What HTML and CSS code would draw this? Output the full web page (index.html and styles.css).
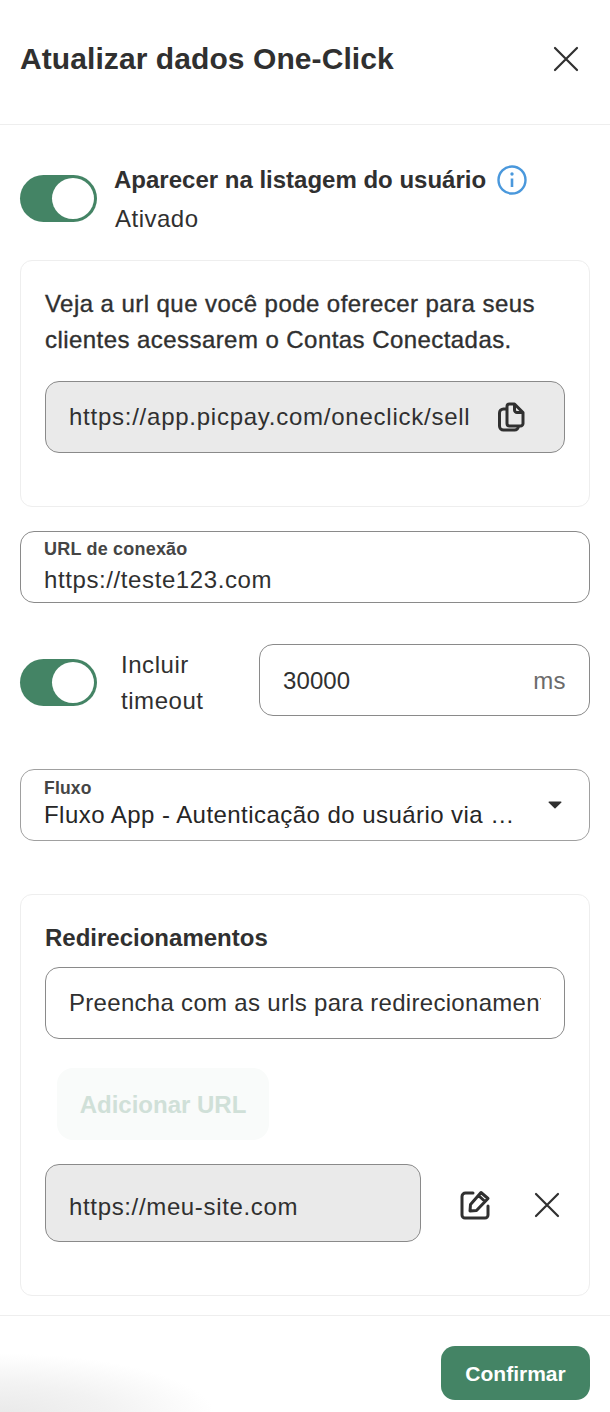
FILE: index.html
```html
<!DOCTYPE html>
<html lang="pt-BR">
<head>
<meta charset="utf-8">
<title>Atualizar dados One-Click</title>
<link rel="stylesheet" href="styles.css">
</head>
<body>
<div class="modal">
  <header class="header">
    <h1 class="title">Atualizar dados One-Click</h1>
    <svg class="close-lg" viewBox="0 0 26 26" width="26" height="26"><path d="M2 2L24 24M24 2L2 24" fill="none" stroke="#303030" stroke-width="2.2" stroke-linecap="round"/></svg>
  </header>
  <main class="content">
    <section class="visible-row">
      <span class="toggle"><span class="knob"></span></span>
      <div class="visible-text">
        <div class="visible-title"><strong>Aparecer na listagem do usuário</strong>
          <svg class="info" viewBox="0 0 32 32" width="32" height="32"><circle cx="16" cy="16" r="13.5" fill="none" stroke="#4a98dc" stroke-width="2.4"/><circle cx="16" cy="10" r="1.7" fill="#4a98dc"/><path d="M16 14.5V23" stroke="#4a98dc" stroke-width="2.6"/></svg>
        </div>
        <div class="visible-state">Ativado</div>
      </div>
    </section>

    <section class="card card-url">
      <p class="card-text">Veja a url que você pode oferecer para seus clientes acessarem o Contas Conectadas.</p>
      <div class="input input-disabled">
        <span class="clip clip-app">https://app.picpay.com/oneclick/seller/abc</span>
        <svg class="copy" viewBox="0 0 28 30" width="28" height="30"><path d="M10 5V4.500A2.500 2.500 0 0 1 12.500 2H17.500L26 10.500V21.500A2.500 2.500 0 0 1 23.500 24H12.500A2.500 2.500 0 0 1 10 21.500V5ZM17.500 2.500V8A2.500 2.500 0 0 0 20 10.500H25.500M10 7H6.500A4 4 0 0 0 2.500 11V24A4 4 0 0 0 6.500 28H17.500A4 4 0 0 0 21.500 24" fill="none" stroke="#303030" stroke-width="3" stroke-linejoin="round" stroke-linecap="round"/></svg>
      </div>
    </section>

    <div class="float-field field-url">
      <span class="float-label">URL de conexão</span>
      <span class="float-value">https://teste123.com</span>
    </div>

    <section class="timeout-row">
      <span class="toggle"><span class="knob"></span></span>
      <span class="timeout-label">Incluir timeout</span>
      <div class="input input-timeout"><span>30000</span><span class="unit">ms</span></div>
    </section>

    <div class="float-field field-flow">
      <span class="float-label">Fluxo</span>
      <span class="float-value flow-value">Fluxo App - Autenticação do usuário via …</span>
      <svg class="caret" viewBox="0 0 14 8" width="14" height="8"><path d="M1 0.5H13A.6.6 0 0 1 13.4 1.5L7.5 7.3A.7.7 0 0 1 6.5 7.3L.6 1.5A.6.6 0 0 1 1 .5Z" fill="#2f2f2f"/></svg>
    </div>

    <section class="card card-redirect">
      <h2 class="card-title">Redirecionamentos</h2>
      <div class="input"><span class="clip clip-hint">Preencha com as urls para redirecionamento do app</span></div>
      <button class="btn-add" type="button">Adicionar URL</button>
      <div class="url-row">
        <div class="input input-disabled input-site">https://meu-site.com</div>
        <svg class="edit" viewBox="0 0 32 32" width="32" height="32"><path d="M14 4H6.500A3.500 3.500 0 0 0 3 7.500V26A3 3 0 0 0 6 29H26A3 3 0 0 0 29 26V17M11 22L11.500 15.500L22 3.500L29 9.500L17.500 21.500ZM19.500 6.500L26 12.500" fill="none" stroke="#303030" stroke-width="3" stroke-linejoin="round" stroke-linecap="round"/></svg>
        <svg class="close-sm" viewBox="0 0 26 26" width="26" height="26"><path d="M2 2L24 24M24 2L2 24" fill="none" stroke="#303030" stroke-width="2.2" stroke-linecap="round"/></svg>
      </div>
    </section>
  </main>
  <footer class="footer">
    <button class="btn-confirm" type="button">Confirmar</button>
  </footer>
  <div class="corner-shade"></div>
</div>
</body>
</html>
```

FILE: styles.css
```css
* { box-sizing: border-box; }
html, body { margin: 0; padding: 0; background: #fff; }
body {
  font-family: "Liberation Sans", Arial, sans-serif;
  color: #303030;
  width: 610px;
  height: 1412px;
  overflow: hidden;
}
.modal { position: relative; width: 610px; height: 1412px; overflow: hidden; }

.header {
  height: 125px;
  border-bottom: 1px solid #eeeeee;
  padding: 0 31px 6px 20px;
  display: flex;
  align-items: center;
  justify-content: space-between;
}
.title { margin: 0; font-size: 30px; font-weight: 700; line-height: 36px; letter-spacing: .08px; }

.content { padding: 0 20px; }

.toggle {
  flex: none;
  display: block;
  width: 77px;
  height: 47px;
  border-radius: 24px;
  background: #448465;
  padding: 3px 3px 3px 32px;
}
.knob { display: block; width: 42px; height: 41px; border-radius: 50%; background: #fff; }

.visible-row { display: flex; gap: 17px; padding-top: 36px; height: 135px; }
.visible-row .toggle { margin-top: 14px; }
.visible-title { display: flex; align-items: center; gap: 10px; font-size: 24px; height: 38px; }
.visible-state { font-size: 24px; letter-spacing: .5px; line-height: 38px; margin-top: 1px; margin-left: 1px; }

.card { border: 1px solid #eeeeee; border-radius: 12px; padding: 24px; }
.card-url { height: 247px; padding-top: 25px; }
.card-text { margin: 0 0 23px; font-size: 24px; line-height: 36px; letter-spacing: .44px; -webkit-text-stroke: .35px #303030; }

.input {
  height: 72px;
  border: 1px solid #8a8a8a;
  border-radius: 14px;
  padding: 0 23px;
  font-size: 24px;
  letter-spacing: .5px;
  display: flex;
  align-items: center;
  background: #fff;
}
.clip { display: block; overflow: hidden; white-space: nowrap; flex: 1; min-width: 0; }
.clip-app { letter-spacing: .75px; max-width: 402px; }
.clip-hint { letter-spacing: .3px; }
.input-disabled { background: #eaeaea; }
.copy { flex: none; margin-left: 26px; margin-right: 16px; }

.float-field {
  position: relative;
  height: 72px;
  border: 1px solid #8a8a8a;
  border-radius: 14px;
  padding: 7px 23px 0;
  display: flex;
  flex-direction: column;
}
.float-label { font-size: 18px; font-weight: 700; line-height: 20px; letter-spacing: .2px; color: #454545; }
.float-value { font-size: 24px; letter-spacing: .6px; line-height: 30px; margin-top: 6px; color: #303030; }
.field-url { margin-top: 24px; }

.timeout-row { display: flex; align-items: flex-start; height: 72px; margin-top: 41px; }
.timeout-row .toggle { margin-top: 15px; }
.timeout-label { width: 138px; margin-left: 24px; margin-top: 3px; font-size: 24px; letter-spacing: .55px; line-height: 36px; }
.input-timeout { flex: 1; justify-content: space-between; padding: 2px 23px 0; letter-spacing: .1px; }
.unit { color: #6b6b6b; letter-spacing: .4px; }

.field-flow { margin-top: 53px; border-color: #a0a0a0; padding-top: 9px; }
.field-flow .float-label { line-height: 18px; font-size: 17.500px; }
.flow-value { display: block; white-space: nowrap; letter-spacing: .45px; color: #262626; margin-top: 3px; }
.caret { position: absolute; right: 27px; top: 31px; }

.card-redirect { margin-top: 53px; height: 402px; padding-top: 29px; }
.card-title { margin: 0 0 15px; font-size: 24px; line-height: 28px; font-weight: 700; }
.btn-add {
  display: block;
  margin: 29px 0 24px 12px;
  width: 212px;
  height: 72px;
  border: 0;
  border-radius: 16px;
  background: #f9fbfa;
  color: #d0e0d8;
  padding-top: 2px;
  font: 700 24px "Liberation Sans", Arial, sans-serif;
}
.url-row { display: flex; align-items: center; }
.input-site { width: 376px; height: 78px; flex: none; padding-top: 7px; letter-spacing: .65px; }
.edit { margin-left: 38px; flex: none; margin-top: 4px; }
.close-sm { margin-left: 43px; flex: none; margin-top: 4px; }

.footer {
  margin-top: 19px;
  height: 97px;
  border-top: 1px solid #eeeeee;
  display: flex;
  justify-content: flex-end;
  padding: 30px 20px 0;
}
.btn-confirm {
  width: 149px;
  height: 54px;
  border: 0;
  border-radius: 14px;
  background: #448465;
  color: #fff;
  padding-top: 3px;
  font: 700 21px "Liberation Sans", Arial, sans-serif;
}
.corner-shade {
  position: absolute;
  left: 0;
  bottom: 0;
  width: 230px;
  height: 70px;
  background: radial-gradient(ellipse 215px 62px at 0 105%, #e9e9e9 0%, #f2f2f2 50%, rgba(255,255,255,0) 100%);
  pointer-events: none;
}
```
